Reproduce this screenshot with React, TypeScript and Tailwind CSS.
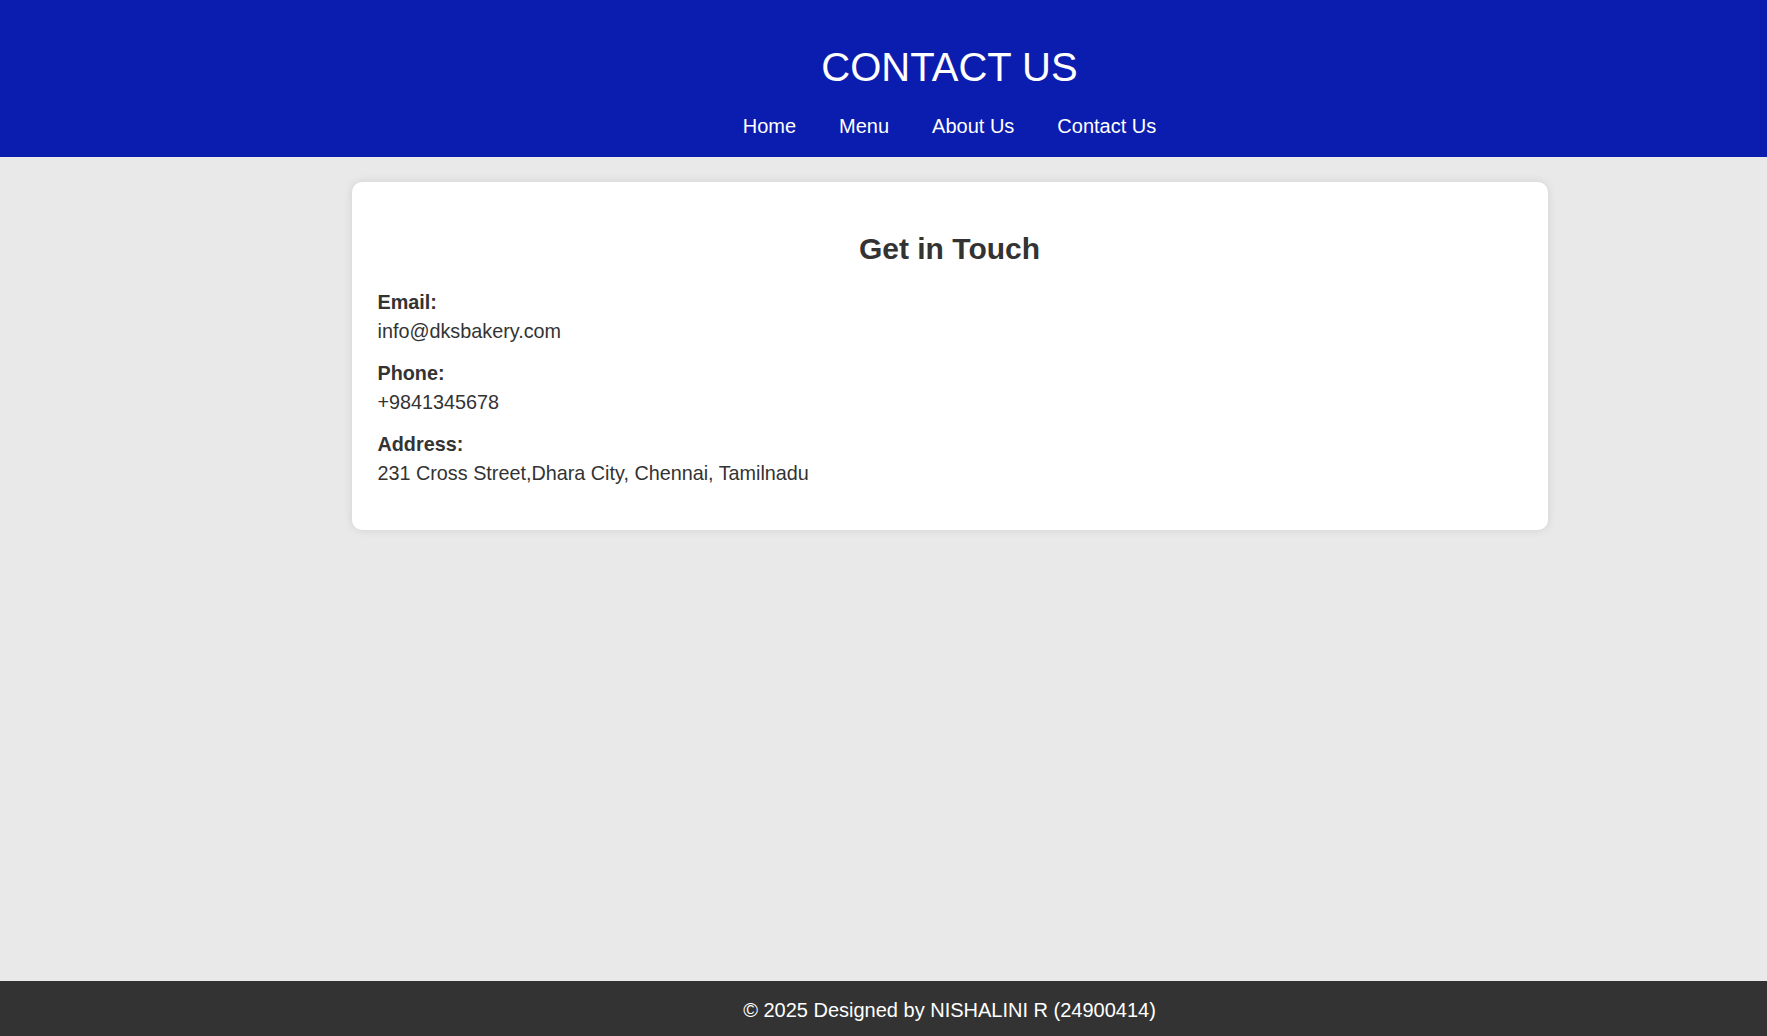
import React from "react";

const links = ["Home", "Menu", "About Us", "Contact Us"];

function ContactItem({ label, value, last }: { label: string; value: string; last?: boolean }) {
  return (
    <div className={last ? "" : "mb-[13px]"}>
      <p className="font-bold leading-[29px]">{label}</p>
      <p className="leading-[29px]">{value}</p>
    </div>
  );
}

export default function App() {
  return (
    <div
      className="min-h-screen w-full flex flex-col bg-[#e9e9e9] overflow-hidden"
      style={{ fontFamily: '"Liberation Sans", Arial, sans-serif' }}
    >
      <header className="bg-[#0b1dae] text-white pl-[132px] pt-[43px] pb-[19px] text-center">
        <h1 className="text-[40px] leading-[48px] font-normal">CONTACT US</h1>
        <nav className="mt-[23px] flex justify-center gap-[43px] text-[20px] leading-[24px]">
          {links.map((l) => (
            <a key={l} href="#" className="text-white no-underline">
              {l}
            </a>
          ))}
        </nav>
      </header>

      <main className="flex-1 pl-[132px] pt-[25px]">
        <div className="mx-auto w-[1196px] bg-white rounded-[10px] shadow-[0_0_10px_rgba(0,0,0,0.1)] px-[26px] pt-[49px] pb-[42px] text-[#333] text-[19.8px]">
          <h2 className="text-center text-[30px] leading-[36px] font-bold mb-[21px]">Get in Touch</h2>
          <ContactItem label="Email:" value="info@dksbakery.com" />
          <ContactItem label="Phone:" value="+9841345678" />
          <ContactItem label="Address:" value="231 Cross Street,Dhara City, Chennai, Tamilnadu" last />
        </div>
      </main>

      <footer className="bg-[#333333] text-white pl-[132px] pt-[17px] pb-[14px] text-center text-[20px] leading-[24px]">
        © 2025 Designed by NISHALINI R (24900414)
      </footer>
    </div>
  );
}
